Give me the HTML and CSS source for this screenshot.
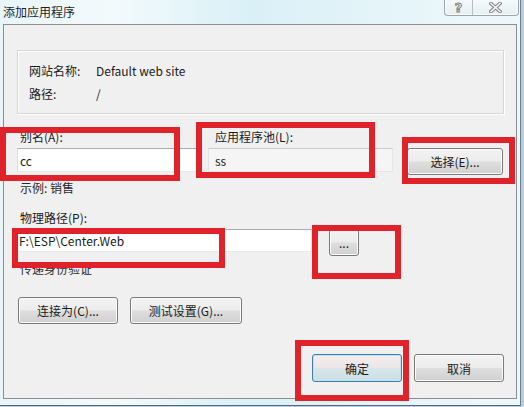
FILE: index.html
```html
<!DOCTYPE html>
<html lang="zh-CN">
<head>
    <meta charset="UTF-8">
    <title>添加应用程序</title>
    <link rel="stylesheet" href="styles.css">
</head>
<body>
    <div class="window">
        <div class="titlebar">添加应用程序</div>

        <div class="caption-btns">
            <div class="cap-btn cap-help"><span class="help-glyph">?</span></div>
            <div class="cap-btn cap-close">
                <svg width="13" height="11" viewBox="0 0 13 11">
                    <path d="M2 1.5 L11 9.5 M11 1.5 L2 9.5" stroke="#7b7f83" stroke-width="3.6" stroke-linecap="square" fill="none"/>
                    <path d="M2 1.5 L11 9.5 M11 1.5 L2 9.5" stroke="#f7f7f7" stroke-width="1.6" stroke-linecap="square" fill="none"/>
                </svg>
            </div>
        </div>

        <div class="client">
            <div class="site-info">
                <div class="info-row"><span class="info-label">网站名称:</span><span>Default web site</span></div>
                <div class="info-row"><span class="info-label">路径:</span><span>/</span></div>
            </div>

            <div class="field-row">
                <div class="field alias-field">
                    <label class="field-label">别名(A):</label>
                    <input type="text" class="textbox alias-input" value="cc">
                </div>
                <div class="field pool-field">
                    <label class="field-label">应用程序池(L):</label>
                    <div class="pool-line">
                        <input type="text" class="textbox pool-input" value="ss" readonly>
                        <button class="btn select-btn">选择(E)...</button>
                    </div>
                </div>
            </div>

            <div class="hint">示例: 销售</div>

            <label class="field-label path-label">物理路径(P):</label>
            <div class="path-line">
                <input type="text" class="textbox path-input" value="F:\ESP\Center.Web">
                <button class="btn browse-btn">...</button>
            </div>

            <div class="hint auth-hint">传递身份验证</div>

            <div class="btn-row">
                <button class="btn connect-btn">连接为(C)...</button>
                <button class="btn test-btn">测试设置(G)...</button>
            </div>

            <div class="dlg-buttons">
                <button class="btn dlg-btn default-btn">确定</button>
                <button class="btn dlg-btn">取消</button>
            </div>
        </div>

        <!-- 红色标注框 -->
        <div class="mark mark-alias"></div>
        <div class="mark mark-pool"></div>
        <div class="mark mark-select"></div>
        <div class="mark mark-path"></div>
        <div class="mark mark-browse"></div>
        <div class="mark mark-ok"></div>
    </div>
</body>
</html>
```

FILE: styles.css
```css
* {
    margin: 0;
    padding: 0;
    box-sizing: border-box;
}

body {
    width: 524px;
    height: 407px;
    overflow: hidden;
    background: #b4cfe0;
    font-family: "Noto Sans CJK SC", "Noto Sans", sans-serif;
    font-size: 12px;
    color: #1b1b1b;
}

.window {
    position: relative;
    width: 521px;
    height: 406px;
    border-right: 1px solid #6f7d87;
    border-bottom: 1px solid #5b6770;
    background: linear-gradient(to right, #e8f5f9 0%, #f3fafc 22%, #d9f0f7 48%, #e4f4f9 72%, #eef8fb 100%);
}

.titlebar {
    height: 24px;
    padding-left: 3px;
    line-height: 24px;
    font-size: 12px;
    color: #1e1e1e;
}

/* 标题栏按钮 */
.caption-btns {
    position: absolute;
    top: -1px;
    right: 1px;
    display: flex;
    border: 1px solid #9aa6ae;
    border-top: none;
    border-radius: 0 0 4px 4px;
    background: linear-gradient(#f6fafb, #e6eff2);
    box-shadow: inset 0 0 0 1px rgba(255, 255, 255, 0.7);
}

.cap-btn {
    height: 16px;
    display: flex;
    align-items: center;
    justify-content: center;
}

.cap-help {
    width: 28px;
    border-right: 1px solid #b3bec5;
}

.cap-close {
    width: 45px;
}

.help-glyph {
    font-family: "DejaVu Sans", sans-serif;
    font-size: 13px;
    font-weight: bold;
    line-height: 13px;
    color: #f4f4f4;
    -webkit-text-stroke: 1px #7b7f83;
}

.client {
    margin-left: 3px;
    width: 514px;
    height: 375px;
    border: 1px solid #8c8e90;
    background: #f0f0f0;
    padding: 25px 12px 0 13px;
}

.site-info {
    height: 64px;
    padding: 8px 11px;
    border: 1px solid #d6d6d6;
    box-shadow: inset 1px 1px 0 #fff, 1px 1px 0 #fff;
}

.info-row {
    display: flex;
    line-height: 23px;
}

.info-label {
    width: 67px;
}

.field-row {
    display: flex;
    align-items: flex-start;
    margin-top: 15px;
}

.field {
    display: flex;
    flex-direction: column;
}

.field-label {
    display: block;
    line-height: 16px;
    margin-bottom: 3px;
}

.alias-field {
    width: 184px;
}

.alias-field .field-label {
    padding-left: 3px;
}

.pool-field {
    margin-left: 7px;
}

.pool-field .field-label {
    padding-left: 7px;
}

.textbox {
    height: 24px;
    border: 1px solid;
    border-color: #abadb3 #e2e3ea #e3e9ef #dbdfe6;
    background: #fff;
    font-family: inherit;
    font-size: 12px;
    color: #1b1b1b;
    padding: 0 2px;
    outline: none;
}

.alias-input {
    width: 184px;
}

.pool-line {
    display: flex;
    align-items: flex-start;
}

.pool-input {
    width: 185px;
    padding-left: 6px;
    background: #f5f5f5;
    border-color: #c9cbcf #e6e6e6 #e6e6e6 #e2e2e2;
}

.btn {
    height: 27px;
    border: 1px solid #7a7a7a;
    border-radius: 3px;
    background: linear-gradient(#f3f3f3 0%, #ececec 48%, #dedede 52%, #d0d0d0 100%);
    box-shadow: inset 0 0 0 1px #fbfbfb;
    font-family: inherit;
    font-size: 12px;
    color: #1b1b1b;
}

.select-btn {
    width: 96px;
    margin-left: 14px;
}

.hint {
    line-height: 16px;
    margin-top: 5px;
    padding-left: 3px;
    color: #2a2a2a;
}

.path-label {
    margin-top: 14px;
    margin-bottom: 3px;
    padding-left: 3px;
}

.path-line {
    display: flex;
    align-items: flex-start;
}

.path-input {
    width: 295px;
    height: 23px;
    padding-left: 1px;
}

.browse-btn {
    width: 30px;
    margin-left: 17px;
    line-height: 12px;
}

.auth-hint {
    margin-top: 5px;
}

.btn-row {
    display: flex;
    gap: 12px;
    margin-top: 20px;
    padding-left: 1px;
}

.connect-btn {
    width: 100px;
}

.test-btn {
    width: 112px;
}

.dlg-buttons {
    display: flex;
    justify-content: flex-end;
    gap: 12px;
    margin-top: 30px;
}

.dlg-btn {
    width: 90px;
    height: 28px;
}

.default-btn {
    border-color: #3d7fa8;
    background: linear-gradient(#f4eeee 0%, #ece6e8 48%, #d8e6ea 52%, #c9dfe6 100%);
    box-shadow: inset 0 0 0 1px #bfe3f2;
}

/* 红色标注 */
.mark {
    position: absolute;
    border: 6px solid #e0222b;
}

.mark-alias {
    left: 0;
    top: 127px;
    width: 180px;
    height: 54px;
}

.mark-pool {
    left: 196px;
    top: 122px;
    width: 179px;
    height: 56px;
}

.mark-select {
    left: 402px;
    top: 137px;
    width: 113px;
    height: 47px;
}

.mark-path {
    left: 12px;
    top: 228px;
    width: 213px;
    height: 40px;
}

.mark-browse {
    left: 312px;
    top: 225px;
    width: 89px;
    height: 54px;
}

.mark-ok {
    left: 295px;
    top: 340px;
    width: 114px;
    height: 61px;
}
```
